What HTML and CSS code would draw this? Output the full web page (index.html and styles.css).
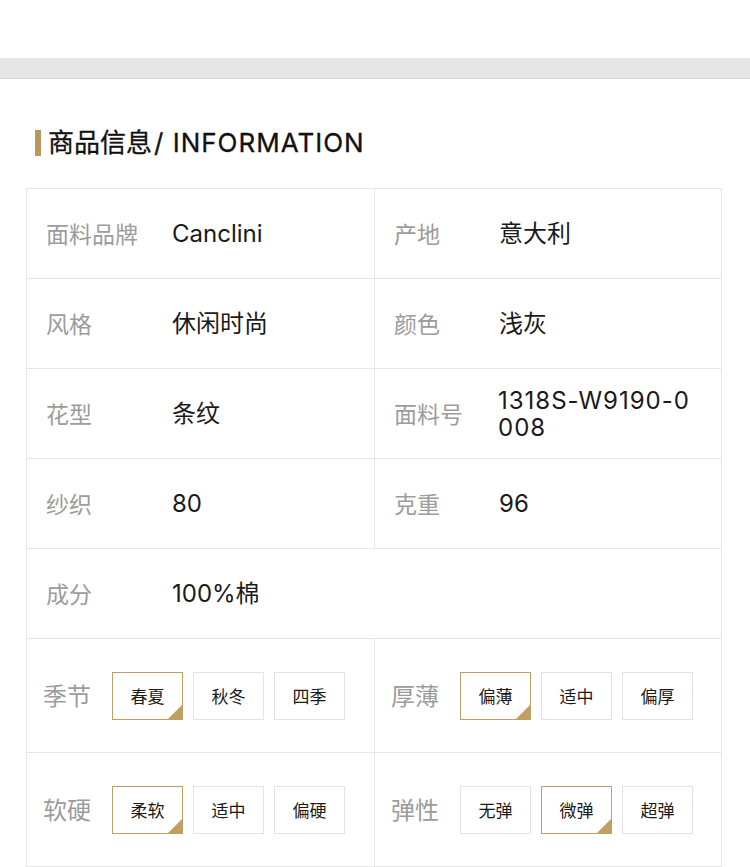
FILE: index.html
```html
<!DOCTYPE html>
<html lang="zh-CN">
<head>
<meta charset="utf-8">
<title>商品信息</title>
<link rel="stylesheet" href="styles.css">
</head>
<body>
<div class="top-space"></div>
<div class="band"></div>
<section class="info">
  <h2 class="title"><span class="title-bar"></span>商品信息<span class="title-en">/ INFORMATION</span></h2>
  <div class="table">
    <div class="row">
      <div class="cell"><span class="label wide">面料品牌</span><span class="value">Canclini</span></div>
      <div class="cell"><span class="label">产地</span><span class="value">意大利</span></div>
    </div>
    <div class="row">
      <div class="cell"><span class="label wide">风格</span><span class="value">休闲时尚</span></div>
      <div class="cell"><span class="label">颜色</span><span class="value">浅灰</span></div>
    </div>
    <div class="row">
      <div class="cell"><span class="label wide">花型</span><span class="value">条纹</span></div>
      <div class="cell"><span class="label">面料号</span><span class="value code">1318S-W9190-0<br>008</span></div>
    </div>
    <div class="row">
      <div class="cell"><span class="label wide">纱织</span><span class="value">80</span></div>
      <div class="cell"><span class="label">克重</span><span class="value">96</span></div>
    </div>
    <div class="row single">
      <div class="cell"><span class="label wide">成分</span><span class="value">100%棉</span></div>
    </div>
    <div class="row tall">
      <div class="cell chip-cell"><span class="label chip-label">季节</span>
        <div class="chips"><span class="chip active">春夏</span><span class="chip">秋冬</span><span class="chip">四季</span></div>
      </div>
      <div class="cell chip-cell"><span class="label chip-label">厚薄</span>
        <div class="chips"><span class="chip active">偏薄</span><span class="chip">适中</span><span class="chip">偏厚</span></div>
      </div>
    </div>
    <div class="row tall">
      <div class="cell chip-cell"><span class="label chip-label">软硬</span>
        <div class="chips"><span class="chip active">柔软</span><span class="chip">适中</span><span class="chip">偏硬</span></div>
      </div>
      <div class="cell chip-cell"><span class="label chip-label">弹性</span>
        <div class="chips"><span class="chip">无弹</span><span class="chip active">微弹</span><span class="chip">超弹</span></div>
      </div>
    </div>
  </div>
</section>
</body>
</html>
```
FILE: styles.css
```css
* { box-sizing: border-box; }
html, body { margin: 0; padding: 0; background: #fff; }
body {
  font-family: Inter, "Noto Sans CJK SC", sans-serif;
  color: #222;
  width: 750px;
  height: 867px;
  overflow: hidden;
}
.top-space { height: 58px; }
.band {
  height: 21px;
  background: #e6e6e6;
  border-bottom: 1px solid #d8d8d8;
}
.info { padding: 51px 28px 0 26px; }
.title {
  margin: 0 0 32px 9px;
  display: flex;
  align-items: center;
  font-size: 26px;
  font-weight: normal;
  line-height: 26px;
  color: #111;
  -webkit-text-stroke: 0.3px #111;
}
.title-en { letter-spacing: 1px; margin-left: 2px; }
.title-bar {
  display: inline-block;
  width: 6px;
  height: 26px;
  background: #b8995a;
  margin-right: 7px;
}
.table {
  border-top: 1px solid #e6e6e6;
  border-left: 1px solid #e6e6e6;
}
.row {
  display: grid;
  grid-template-columns: 348px 347px;
  height: 90px;
}
.row.single { grid-template-columns: 695px; }
.row.tall { height: 114px; }
.cell {
  display: flex;
  align-items: center;
  border-right: 1px solid #e6e6e6;
  border-bottom: 1px solid #e6e6e6;
  padding-left: 19px;
}
.label {
  font-family: "Noto Sans CJK SC", sans-serif;
  font-size: 23px;
  line-height: 28px;
  color: #9c9c9c;
  width: 105px;
  flex: none;
  margin-top: -2px;
}
.label.wide { width: 126px; }
.value {
  font-size: 24px;
  color: #1a1a1a;
  line-height: 27px;
}
.value.code { letter-spacing: 1px; margin-left: -1px; }
.chip-cell { padding-left: 16px; }
.chip-label { width: 69px; font-size: 24px; }
.chips { display: flex; gap: 10px; }
.chip {
  position: relative;
  width: 71px;
  height: 48px;
  border: 1px solid #e3e3e3;
  display: flex;
  align-items: center;
  justify-content: center;
  font-size: 17px;
  color: #1a1a1a;
  font-family: "Noto Sans CJK SC", sans-serif;
}
.chip.active { border-color: #bf9f62; }
.chip.active::after {
  content: "";
  position: absolute;
  right: 0;
  bottom: 0;
  width: 0;
  height: 0;
  border-style: solid;
  border-width: 0 0 14px 14px;
  border-color: transparent transparent #bf9f62 transparent;
}
```
